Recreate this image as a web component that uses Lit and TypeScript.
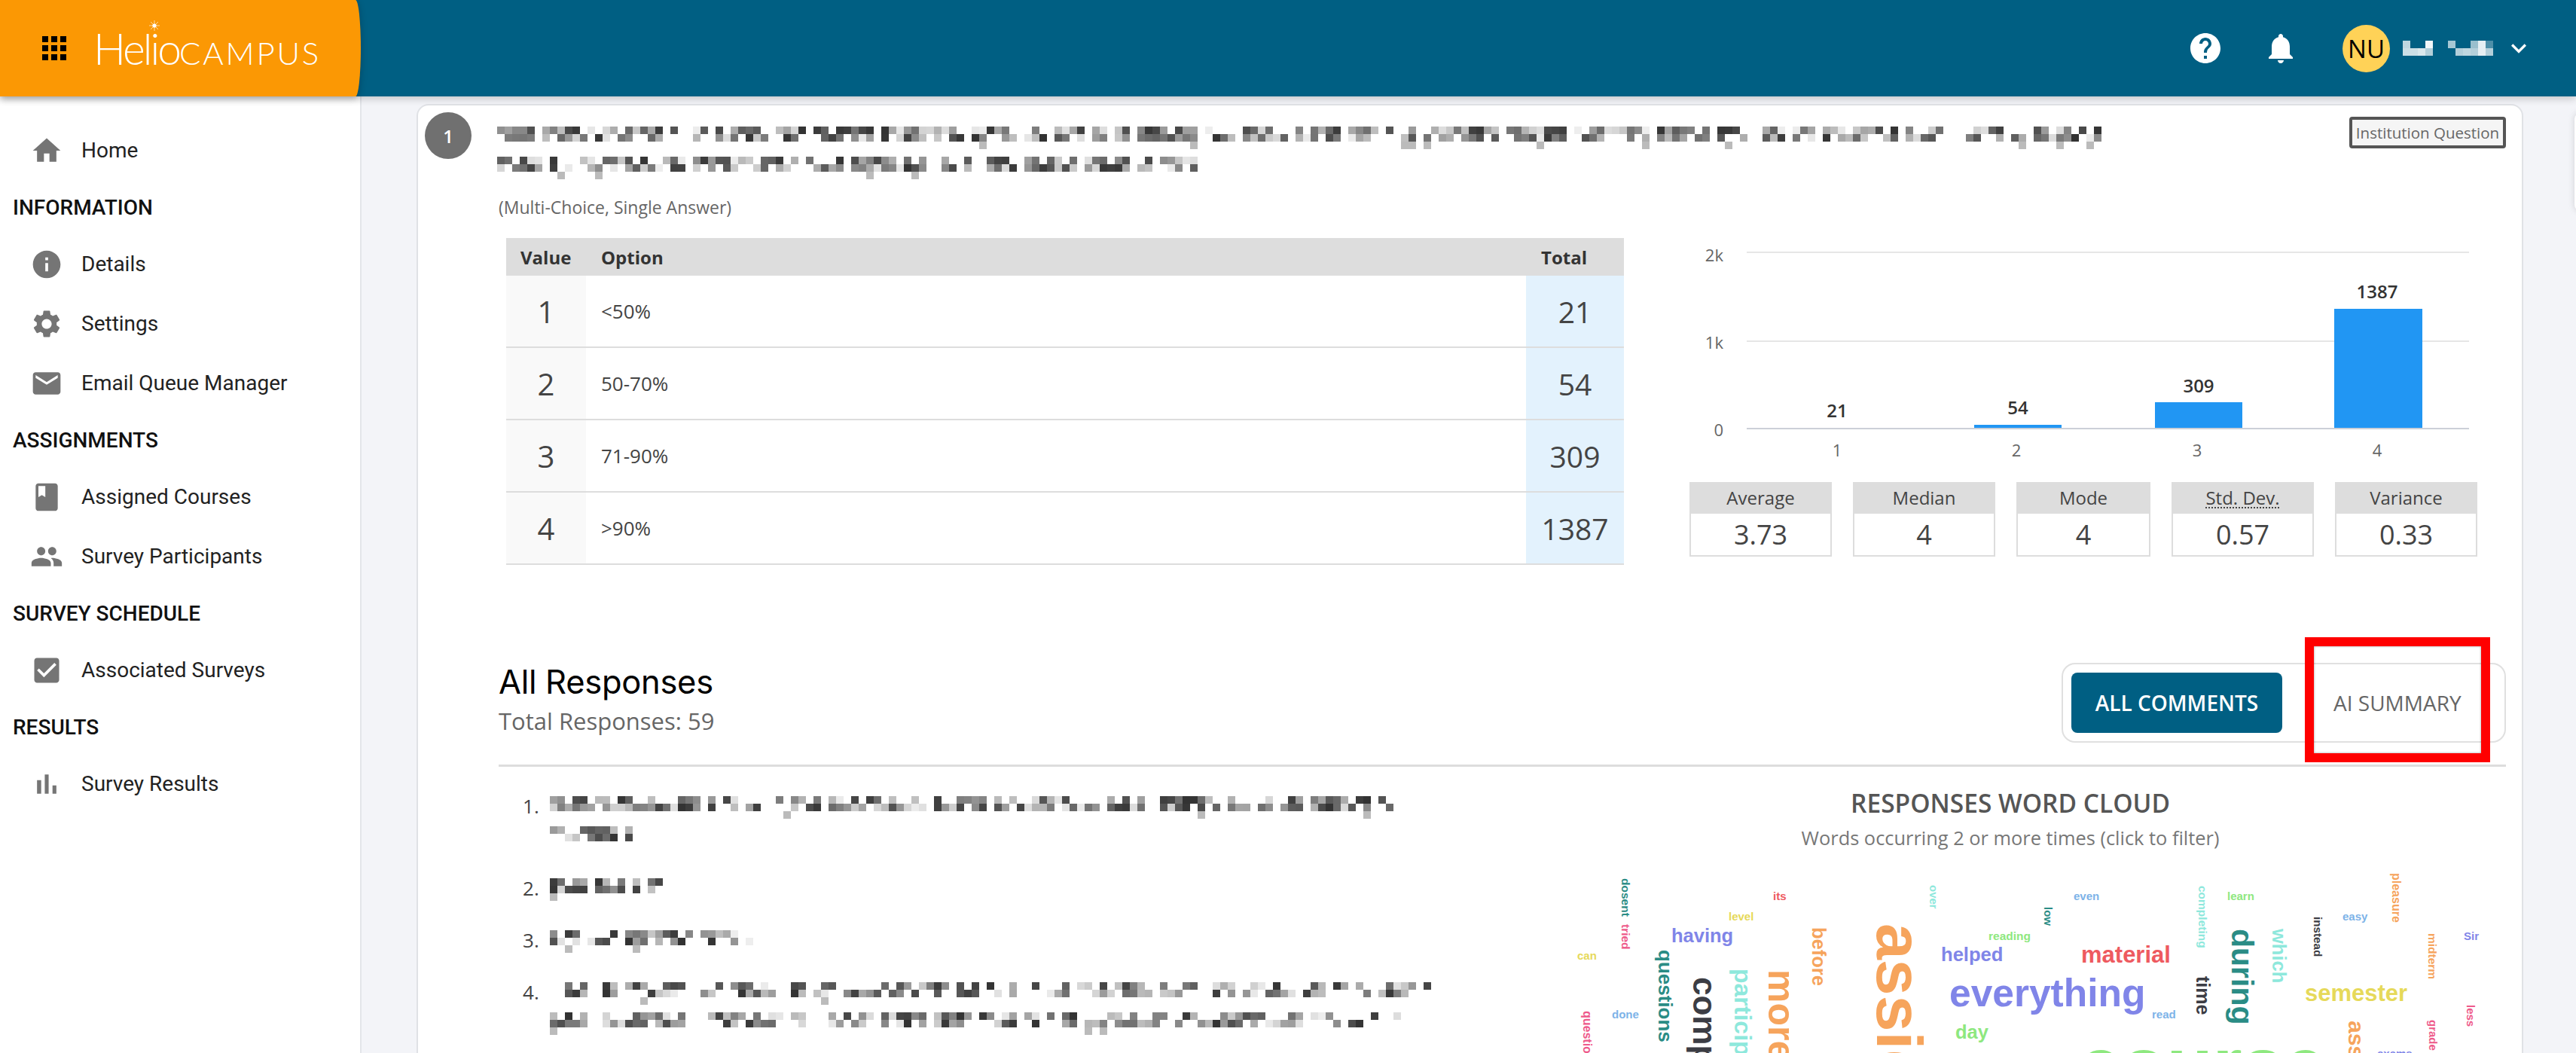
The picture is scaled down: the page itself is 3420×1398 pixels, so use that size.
import { LitElement, html, css, svg } from "lit";
import { customElement } from "lit/decorators.js";

const I = {
  apps: "M4 8h4V4H4v4zm6 12h4v-4h-4v4zm-6 0h4v-4H4v4zm0-6h4v-4H4v4zm6 0h4v-4h-4v4zm6-10v4h4V4h-4zm-6 4h4V4h-4v4zm6 6h4v-4h-4v4zm0 6h4v-4h-4v4z",
  home: "M10 20v-6h4v6h5v-8h3L12 3 2 12h3v8z",
  info: "M12 2C6.48 2 2 6.48 2 12s4.48 10 10 10 10-4.48 10-10S17.52 2 12 2zm1 15h-2v-6h2v6zm0-8h-2V7h2v2z",
  gear: "M19.14 12.94c.04-.3.06-.61.06-.94 0-.32-.02-.64-.07-.94l2.03-1.58c.18-.14.23-.41.12-.61l-1.92-3.32c-.12-.22-.37-.29-.59-.22l-2.39.96c-.5-.38-1.03-.7-1.62-.94l-.36-2.54c-.04-.24-.24-.41-.48-.41h-3.84c-.24 0-.43.17-.47.41l-.36 2.54c-.59.24-1.13.57-1.62.94l-2.39-.96c-.22-.08-.47 0-.59.22L2.74 8.87c-.12.21-.08.47.12.61l2.03 1.58c-.05.3-.09.63-.09.94s.02.64.07.94l-2.03 1.58c-.18.14-.23.41-.12.61l1.92 3.32c.12.22.37.29.59.22l2.39-.96c.5.38 1.03.7 1.62.94l.36 2.54c.05.24.24.41.48.41h3.84c.24 0 .44-.17.47-.41l.36-2.54c.59-.24 1.13-.56 1.62-.94l2.39.96c.22.08.47 0 .59-.22l1.92-3.32c.12-.22.07-.47-.12-.61l-2.01-1.58zM12 15.6c-1.98 0-3.6-1.62-3.6-3.6s1.62-3.6 3.6-3.6 3.6 1.62 3.6 3.6-1.62 3.6-3.6 3.6z",
  mail: "M20 4H4c-1.1 0-1.99.9-1.99 2L2 18c0 1.1.9 2 2 2h16c1.1 0 2-.9 2-2V6c0-1.1-.9-2-2-2zm0 4l-8 5-8-5V6l8 5 8-5v2z",
  book: "M18 2H6c-1.1 0-2 .9-2 2v16c0 1.1.9 2 2 2h12c1.1 0 2-.9 2-2V4c0-1.1-.9-2-2-2zM6 4h5v8l-2.5-1.5L6 12V4z",
  people: "M16 11c1.66 0 2.99-1.34 2.99-3S17.66 5 16 5c-1.66 0-3 1.34-3 3s1.34 3 3 3zm-8 0c1.66 0 2.99-1.34 2.99-3S9.66 5 8 5C6.34 5 5 6.34 5 8s1.34 3 3 3zm0 2c-2.33 0-7 1.17-7 3.5V19h14v-2.5c0-2.33-4.67-3.5-7-3.5zm8 0c-.29 0-.62.02-.97.05 1.16.84 1.97 1.97 1.97 3.45V19h6v-2.5c0-2.33-4.67-3.5-7-3.5z",
  check: "M19 3H5c-1.11 0-2 .9-2 2v14c0 1.1.89 2 2 2h14c1.11 0 2-.9 2-2V5c0-1.1-.89-2-2-2zm-9 14l-5-5 1.41-1.41L10 14.17l7.59-7.59L19 8l-9 9z",
  bars: "M5 9.2h3V19H5zM10.6 5h2.8v14h-2.8zm5.6 8H19v6h-2.8z",
  help: "M12 2C6.48 2 2 6.48 2 12s4.48 10 10 10 10-4.48 10-10S17.52 2 12 2zm1 17h-2v-2h2v2zm2.07-7.75l-.9.92C13.45 12.9 13 13.5 13 15h-2v-.5c0-1.1.45-2.1 1.17-2.83l1.24-1.26c.37-.36.59-.86.59-1.41 0-1.1-.9-2-2-2s-2 .9-2 2H8c0-2.21 1.79-4 4-4s4 1.79 4 4c0 .88-.36 1.68-.93 2.25z",
  bell: "M12 22c1.1 0 2-.9 2-2h-4c0 1.1.89 2 2 2zm6-6v-5c0-3.07-1.64-5.64-4.5-6.32V4c0-.83-.67-1.5-1.5-1.5s-1.5.67-1.5 1.5v.68C7.63 5.36 6 7.92 6 11v5l-2 2v1h16v-1l-2-2z",
  more: "M16.59 8.59L12 13.17 7.41 8.59 6 10l6 6 6-6z",
};

const icon = (d: string, cls: string) =>
  html`<svg class=${cls} viewBox="0 0 24 24" aria-hidden="true"><path d=${d}></path></svg>`;

function rng(seed: number) {
  return () => {
    seed |= 0;
    seed = (seed + 0x6d2b79f5) | 0;
    let t = Math.imul(seed ^ (seed >>> 15), 1 | seed);
    t = (t + Math.imul(t ^ (t >>> 7), 61 | t)) ^ t;
    return ((t ^ (t >>> 14)) >>> 0) / 4294967296;
  };
}

/* Pixelated (redacted) text: a mosaic of grey cells, computed from a seed. */
function mosaic(width: number, seed: number, offset = 0, density = 0.74) {
  const r = rng(seed);
  const cols = Math.floor(width / 10);
  const cells: unknown[] = [];
  let left = 2 + Math.floor(r() * 6);
  for (let c = offset; c < cols; c++) {
    if (left-- <= 0) {
      left = 2 + Math.floor(r() * 7);
      if (r() < 0.7) continue;
    }
    for (let row = 0; row < 2; row++) {
      if (r() > density) continue;
      const v = Math.floor(50 + Math.pow(r(), 1.1) * 190);
      cells.push(svg`<rect x=${c * 10} y=${row * 10} width="10" height="10" fill=${`rgb(${v},${v},${v})`}></rect>`);
    }
    if (r() < 0.05) cells.push(svg`<rect x=${c * 10} y="20" width="10" height="10" fill="#bbb"></rect>`);
  }
  return html`<svg class="mosaic" width=${width} height="30" shape-rendering="crispEdges" aria-hidden="true">${cells}</svg>`;
}

const NAV: { head?: string; label?: string; icon?: string; cls?: string }[] = [
  { label: "Home", icon: I.home },
  { head: "INFORMATION" },
  { label: "Details", icon: I.info },
  { label: "Settings", icon: I.gear },
  { label: "Email Queue Manager", icon: I.mail },
  { head: "ASSIGNMENTS" },
  { label: "Assigned Courses", icon: I.book },
  { label: "Survey Participants", icon: I.people },
  { head: "SURVEY SCHEDULE" },
  { label: "Associated Surveys", icon: I.check },
  { head: "RESULTS" },
  { label: "Survey Results", icon: I.bars },
];

const ROWS = [
  ["1", "<50%", "21"],
  ["2", "50-70%", "54"],
  ["3", "71-90%", "309"],
  ["4", ">90%", "1387"],
];

const STATS = [
  ["Average", "3.73", ""],
  ["Median", "4", ""],
  ["Mode", "4", "narrow"],
  ["Std. Dev.", "0.57", "abbr"],
  ["Variance", "0.33", ""],
];

const C = {
  teal: "#2a8c85", pink: "#ee5a8a", yellow: "#e6d95a", purple: "#8085e8", blue: "#7db3e8",
  green: "#8ee87f", orange: "#f6a45c", red: "#ee5a60", aqua: "#8ee8dc", dark: "#3c3d44",
};

/* word, size, colour, x, y (page coordinates), rotated */
const WORDS: [string, number, string, number, number, boolean][] = [
  ["its", 15, C.red, 2354, 1194, false],
  ["level", 15, C.yellow, 2295, 1221, false],
  ["having", 25.5, C.purple, 2219, 1250, false],
  ["can", 15, C.yellow, 2094, 1273, false],
  ["done", 15, C.blue, 2140, 1351, false],
  ["even", 15, C.blue, 2753, 1194, false],
  ["learn", 15, C.green, 2957, 1194, false],
  ["easy", 15, C.blue, 3110, 1221, false],
  ["reading", 15.5, C.green, 2640, 1247, false],
  ["Sir", 15, C.purple, 3271, 1247, false],
  ["helped", 25.6, C.purple, 2577, 1275, false],
  ["material", 31, C.red, 2763, 1277, false],
  ["everything", 51.5, C.purple, 2588, 1335, false],
  ["read", 15, C.blue, 2857, 1351, false],
  ["semester", 31, C.yellow, 3060, 1328, false],
  ["day", 25.5, C.green, 2596, 1378, false],
  ["course", 100, C.green, 2760, 1447, false],
  ["exams", 15, C.purple, 3156, 1403, false],
  ["dosent", 15.5, C.teal, 2153, 1165, true],
  ["tried", 15.5, C.pink, 2153, 1226, true],
  ["questions", 26, C.teal, 2202, 1260, true],
  ["question", 16, C.pink, 2102, 1341, true],
  ["completed", 44, C.dark, 2248, 1296, true],
  ["participation", 32, C.aqua, 2303, 1285, true],
  ["more", 50, C.orange, 2348, 1286, true],
  ["before", 25.5, C.orange, 2406, 1230, true],
  ["assignments", 86, C.orange, 2492, 1225, true],
  ["over", 15, C.aqua, 2562, 1174, true],
  ["low", 15, C.teal, 2714, 1203, true],
  ["completing", 15.5, C.aqua, 2919, 1175, true],
  ["during", 41, C.teal, 2963, 1232, true],
  ["which", 25.5, C.aqua, 3017, 1232, true],
  ["time", 25, C.dark, 2916, 1295, true],
  ["instead", 15.2, C.dark, 3072, 1216, true],
  ["pleasure", 16, C.orange, 3176, 1158, true],
  ["midterm", 15.5, C.orange, 3224, 1238, true],
  ["less", 15, C.pink, 3275, 1333, true],
  ["grade", 15, C.pink, 3225, 1353, true],
  ["assignment", 30, C.orange, 3118, 1354, true],
];

const LIST: { lines: [number, number][]; offset?: number }[] = [
  { lines: [[1122, 11], [110, 12]] },
  { lines: [[150, 13]] },
  { lines: [[270, 14]] },
  { lines: [[1170, 15], [1130, 16]], offset: 2 },
];

@customElement("app-root")
export class AppRoot extends LitElement {
  static styles = css`
    :host { display: block; height: 1398px; overflow: hidden; position: relative; background: #f3f4f8; font-family: "Open Sans", sans-serif; color: #444; }
    .top { position: relative; z-index: 2; height: 128px; background: #005f83; display: flex; align-items: center; box-shadow: 0 3px 10px rgba(0,0,0,.2); }
    .brand { width: 479px; height: 128px; flex: none; background: #fb9804; border-radius: 0 7px 7px 0 / 0 50% 50% 0; display: flex; align-items: center; box-sizing: border-box; padding-left: 48px; box-shadow: 0 3px 10px rgba(0,0,0,.25); }
    .apps { width: 48px; height: 48px; fill: #000; flex: none; }
    .logo { position: relative; margin-left: 28px; display: flex; align-items: baseline; font-family: Lato, sans-serif; color: #fff; white-space: nowrap; line-height: 1; }
    .helio { font-size: 57px; font-weight: 300; letter-spacing: -3px; }
    .campus { font-size: 42px; font-weight: 300; letter-spacing: 2.8px; }
    .sun { position: absolute; left: 74px; top: -9px; width: 14px; height: 14px; }
    .actions { margin-left: auto; display: flex; align-items: center; padding-right: 56px; }
    .ti { width: 48px; height: 48px; fill: #fff; flex: none; }
    .bell { margin-left: 52px; }
    .avatar { margin-left: 58px; width: 63px; height: 63px; border-radius: 50%; background: #ffd257; color: #000; display: flex; align-items: center; justify-content: center; font-size: 33px; flex: none; }
    .uname { margin-left: 17px; width: 120px; height: 20px; flex: none; display: block; }
    .chev { margin-left: 14px; width: 40px; height: 40px; fill: #fff; flex: none; }

    .page { display: flex; height: 1270px; }
    nav { width: 480px; flex: none; box-sizing: border-box; background: #fff; border-right: 2px solid #e3e5ea; padding-top: 32px; font-family: Roboto, sans-serif; }
    .item { height: 79px; display: flex; align-items: center; padding-left: 40px; font-size: 28px; color: #222; }
    .item svg { width: 44px; height: 44px; fill: #757575; margin-right: 24px; flex: none; }
    .head { height: 72px; display: flex; align-items: center; padding-left: 17px; font-size: 28px; font-weight: 500; color: #111; }

    main { flex: 1; min-width: 0; padding: 10px 70px 0 73px; }
    .card { box-sizing: border-box; background: #fff; border: 2px solid #e0e2e6; border-radius: 16px; padding: 9px 21px 0 9px; height: 1400px; }
    .qhead { display: flex; align-items: flex-start; }
    .num { width: 62px; height: 62px; border-radius: 50%; background: #707070; color: #fff; display: flex; align-items: center; justify-content: center; font-size: 24px; font-weight: 600; flex: none; }
    .qtext { margin: 19px 0 0 34px; display: flex; flex-direction: column; gap: 10px; }
    .mosaic { display: block; }
    .tag { margin: 6px 0 0 auto; box-sizing: border-box; width: 208px; height: 42px; border: 4px solid #555; border-radius: 4px; background: #f5f5f5; display: flex; align-items: center; justify-content: center; font-size: 20.5px; color: #666; white-space: nowrap; }
    .body { margin-left: 98px; }
    .qtype { margin-top: 19px; height: 36px; line-height: 36px; font-size: 23px; color: #666; }
    .stats-row { display: flex; margin-top: 23px; }
    table { width: 1484px; margin-left: 10px; border-collapse: collapse; table-layout: fixed; flex: none; }
    th { height: 50px; background: #ddd; font-size: 24px; font-weight: 700; padding: 0; color: #333; text-align: left; }
    th.v { padding-left: 19px; }
    th.o { padding-left: 20px; }
    th.t { padding-left: 20px; }
    td { height: 94px; border-bottom: 2px solid #ddd; padding: 0; }
    td.v { background: #f9f9f9; text-align: center; font-size: 40px; }
    td.o { padding-left: 20px; font-size: 26px; }
    td.t { background: #e3f2fd; text-align: center; font-size: 39px; }
    .side { margin-left: 87px; width: 1047px; flex: none; }
    .chart { display: block; width: 1047px; height: 324px; font-family: "Open Sans", sans-serif; }
    .chart .ax { font-size: 22px; fill: #666; }
    .chart .val { font-size: 24px; font-weight: 600; fill: #333; text-anchor: middle; }
    .stats { display: flex; gap: 28px; }
    .stat { width: 189px; box-sizing: border-box; border: 2px solid #ddd; text-align: center; }
    .stat.narrow { width: 178px; }
    .stat b { display: block; height: 42px; line-height: 42px; background: #ddd; font-weight: 400; font-size: 24px; margin: -2px -2px 0; }
    .stat.abbr b span { text-decoration: underline dotted #444 2px; text-underline-offset: 3px; }
    .stat i { display: block; font-style: normal; height: 55px; line-height: 55px; font-size: 36px; }

    .rhead { display: flex; justify-content: space-between; align-items: flex-start; margin-top: 130px; padding-bottom: 29px; border-bottom: 3px solid #ddd; }
    h2 { margin: 0; font: 400 43.5px/50px Inter, sans-serif; color: #000; letter-spacing: -.3px; }
    .total { margin-top: 5px; font-size: 31px; line-height: 44px; color: #666; }
    .toggle { box-sizing: border-box; width: 590px; height: 106px; border: 2px solid #e0e0e0; border-radius: 18px; padding: 11px; display: flex; align-items: center; }
    .toggle span { font-size: 28px; white-space: nowrap; }
    .on { width: 280px; height: 80px; background: #005f83; color: #fff; border-radius: 8px; display: flex; align-items: center; justify-content: center; font-weight: 600; flex: none; }
    .off { color: #666; margin-left: 68px; }
    .lower { display: flex; }
    ol { list-style: none; margin: 39px 0 0; padding: 0 0 0 32px; width: 1378px; box-sizing: border-box; flex: none; display: flex; flex-direction: column; gap: 39px; }
    li { display: flex; }
    .n { width: 36px; flex: none; font-size: 26px; line-height: 26px; }
    .ls { display: flex; flex-direction: column; gap: 10px; }
    .cloud { width: 1258px; flex: none; text-align: center; padding-top: 28px; }
    .cloud h3 { margin: 0; font-size: 33.5px; line-height: 40px; font-weight: 600; color: #555; }
    .cloud p { margin: 6px 0 0; font-size: 25.4px; line-height: 40px; color: #777; }
    .words { display: block; margin-top: 19px; overflow: hidden; font-family: "Liberation Sans", Arial, sans-serif; font-weight: 700; }

    .mark { position: absolute; left: 3060px; top: 846px; box-sizing: border-box; width: 246px; height: 166px; border: 12px solid #f00; box-shadow: inset 0 0 3px rgba(0,0,0,.4); z-index: 3; }
    .edge { position: absolute; left: 3418px; top: 150px; width: 30px; height: 130px; border-radius: 8px; background: #fff; box-shadow: 0 0 10px rgba(0,0,0,.15); }
  `;

  private renderWords() {
    const ox = 2040, oy = 1150;
    return svg`${WORDS.map(([w, s, c, x, y, rot]) => {
      const px = x - ox, py = y - oy;
      return svg`<text x=${px} y=${py} font-size=${s} fill=${c} transform=${rot ? `rotate(90 ${px} ${py})` : ""}>${w}</text>`;
    })}`;
  }

  private renderUser() {
    const cells = [
      [0, 0, .75], [0, 1, .8], [10, 1, .8], [20, 0, .0], [20, 1, .85], [30, 0, .95], [30, 1, .7],
      [60, 0, .65], [70, 1, .7], [80, 1, .75], [90, 0, .6], [90, 1, .7], [100, 0, .9], [100, 1, .9], [110, 0, .3], [110, 1, .7],
    ];
    return html`<svg class="uname" shape-rendering="crispEdges" aria-hidden="true">${cells.map(
      ([x, r, o]) => svg`<rect x=${x} y=${r * 10} width="10" height="10" fill="#fff" opacity=${o}></rect>`
    )}</svg>`;
  }

  render() {
    return html`
      <header class="top">
        <div class="brand">
          ${icon(I.apps, "apps")}
          <div class="logo">
            <span class="helio">Helio</span><span class="campus">CAMPUS</span>
            <svg class="sun" viewBox="0 0 14 14" aria-hidden="true">
              <circle cx="7" cy="7" r="2.6" fill="#fff"></circle>
              <path d="M7 0v14M0 7h14M2 2l10 10M12 2L2 12" stroke="#fff" stroke-width=".8" opacity=".8"></path>
            </svg>
          </div>
        </div>
        <div class="actions">
          ${icon(I.help, "ti")}
          ${icon(I.bell, "ti bell")}
          <div class="avatar">NU</div>
          ${this.renderUser()}
          ${icon(I.more, "chev")}
        </div>
      </header>
      <div class="page">
        <nav>
          ${NAV.map((n) =>
            n.head
              ? html`<div class="head">${n.head}</div>`
              : html`<div class="item">${icon(n.icon!, "")}<span>${n.label}</span></div>`
          )}
        </nav>
        <main>
          <section class="card">
            <div class="qhead">
              <div class="num">1</div>
              <div class="qtext">${mosaic(2130, 1)}${mosaic(940, 2)}</div>
              <div class="tag">Institution Question</div>
            </div>
            <div class="body">
              <div class="qtype">(Multi-Choice, Single Answer)</div>
              <div class="stats-row">
                <table>
                  <colgroup><col style="width:106px" /><col /><col style="width:130px" /></colgroup>
                  <thead><tr><th class="v">Value</th><th class="o">Option</th><th class="t">Total</th></tr></thead>
                  <tbody>
                    ${ROWS.map((r) => html`<tr><td class="v">${r[0]}</td><td class="o">${r[1]}</td><td class="t">${r[2]}</td></tr>`)}
                  </tbody>
                </table>
                <div class="side">
                  <svg class="chart" viewBox="0 0 1047 324">
                    <path d="M76 19H1035M76 137H1035" stroke="#e6e6e6" stroke-width="2"></path>
                    <path d="M76 253H1035" stroke="#ccd0d8" stroke-width="2"></path>
                    <rect x="378" y="248" width="116" height="4" fill="#2196f3"></rect>
                    <rect x="618" y="218" width="116" height="34" fill="#2196f3"></rect>
                    <rect x="856" y="94" width="117" height="158" fill="#2196f3"></rect>
                    <text class="val" x="196" y="238">21</text>
                    <text class="val" x="436" y="234">54</text>
                    <text class="val" x="676" y="205">309</text>
                    <text class="val" x="913" y="80">1387</text>
                    <text class="ax" x="45" y="31" text-anchor="end">2k</text>
                    <text class="ax" x="45" y="147" text-anchor="end">1k</text>
                    <text class="ax" x="45" y="263" text-anchor="end">0</text>
                    <text class="ax" x="196" y="290" text-anchor="middle">1</text>
                    <text class="ax" x="434" y="290" text-anchor="middle">2</text>
                    <text class="ax" x="674" y="290" text-anchor="middle">3</text>
                    <text class="ax" x="913" y="290" text-anchor="middle">4</text>
                  </svg>
                  <div class="stats">
                    ${STATS.map((s) => html`<div class="stat ${s[2]}"><b><span>${s[0]}</span></b><i>${s[1]}</i></div>`)}
                  </div>
                </div>
              </div>
              <div class="rhead">
                <div>
                  <h2>All Responses</h2>
                  <div class="total">Total Responses: 59</div>
                </div>
                <div class="toggle"><span class="on">ALL COMMENTS</span><span class="off">AI SUMMARY</span></div>
              </div>
              <div class="lower">
                <ol>
                  ${LIST.map(
                    (it, i) => html`<li>
                      <span class="n">${i + 1}.</span>
                      <div class="ls">${it.lines.map(([w, seed], k) => mosaic(w, seed, k === 0 ? it.offset ?? 0 : 0, 0.62))}</div>
                    </li>`
                  )}
                </ol>
                <div class="cloud">
                  <h3>RESPONSES WORD CLOUD</h3>
                  <p>Words occurring 2 or more times (click to filter)</p>
                  <svg class="words" width="1258" height="300">${this.renderWords()}</svg>
                </div>
              </div>
            </div>
          </section>
        </main>
      </div>
      <div class="edge"></div>
      <div class="mark"></div>
    `;
  }
}
